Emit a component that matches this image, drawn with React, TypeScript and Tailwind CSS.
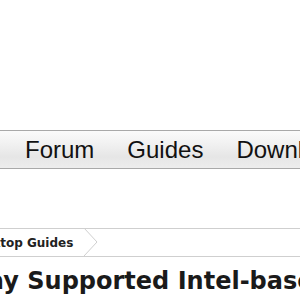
export default function App() {
  return (
    <div className="w-[300px] h-[300px] overflow-hidden bg-white relative">
      <div className="h-[130px]" />
      <nav className="h-[39px] border-y border-[#a9a9a9] bg-[linear-gradient(to_bottom,#fbfbfb_0%,#f1f1f1_35%,#e6e6e6_70%,#ededed_100%)] flex items-center pl-[25px] gap-[33px] whitespace-nowrap" style={{ fontFamily: '"Liberation Sans", Arial, sans-serif' }}>
        <span className="text-[24px] leading-none text-[#111]">Forum</span>
        <span className="text-[24px] leading-none text-[#111]">Guides</span>
        <span className="text-[24px] leading-none text-[#111]">Downloads</span>
      </nav>
      <div className="h-[59px]" />
      <div className="h-[29px] border-y border-[#cfcfcf] flex items-center whitespace-nowrap overflow-hidden" style={{ fontFamily: '"DejaVu Sans", Verdana, sans-serif' }}>
        <span className="ml-[-33px] text-[12px] font-bold text-[#222]">Desktop Guides</span>
        <svg width="16" height="29" viewBox="0 0 16 29" className="ml-[11px] shrink-0">
          <polyline points="0,0 13,14 0,28" fill="none" stroke="#cfcfcf" strokeWidth="1" />
        </svg>
      </div>
      <h1 className="mt-[12px] ml-[-80px] text-[24px] leading-none font-bold text-[#1a1a1a] whitespace-nowrap" style={{ fontFamily: '"DejaVu Sans", Verdana, sans-serif' }}>
        Display Supported Intel-based Macs
      </h1>
    </div>
  );
}
